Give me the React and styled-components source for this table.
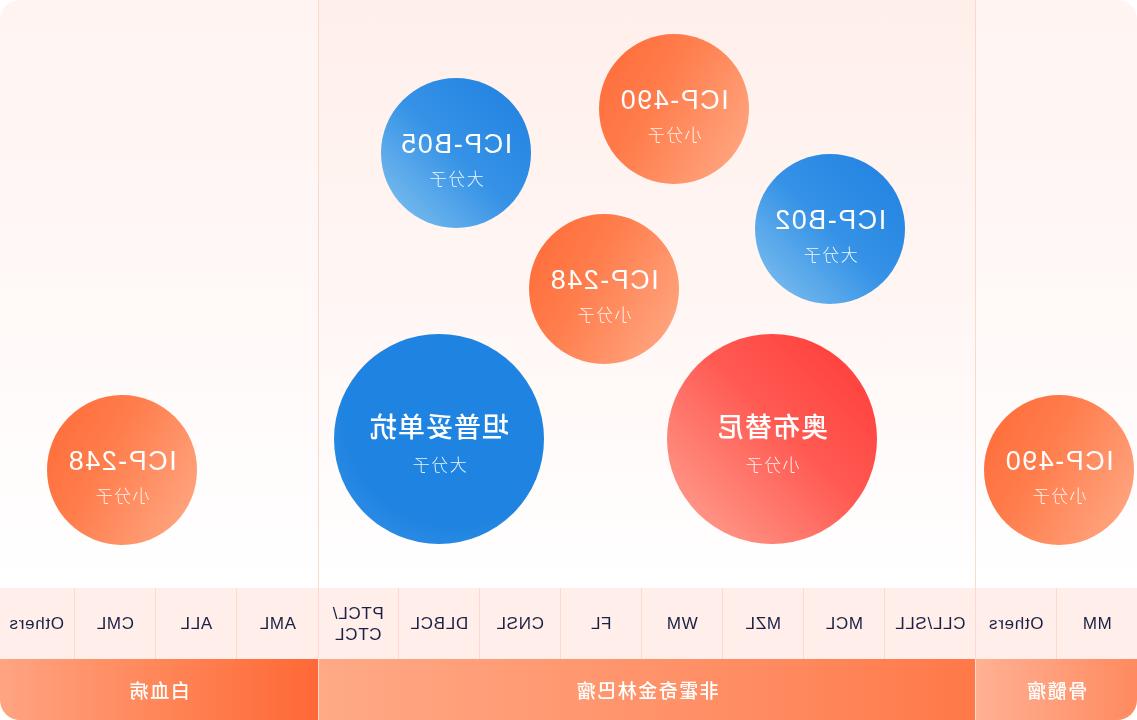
import React from 'react';
import styled, { createGlobalStyle } from 'styled-components';

const GlobalStyle = createGlobalStyle`
  html, body {
    margin: 0;
    padding: 0;
    background: #ffffff;
  }
  body {
    font-family: "Liberation Sans", "Noto Sans CJK SC", Arial, sans-serif;
  }
`;

// the reference is a mirror image, so the whole board is flipped once here
const Page = styled.div`
  width: 1137px;
  height: 720px;
  transform: scaleX(-1);
`;

const Board = styled.div`
  display: flex;
  width: 100%;
  height: 100%;
  border-radius: 20px;
  overflow: hidden;
`;

const Section = styled.div`
  display: flex;
  flex-direction: column;
  width: ${p => p.width}px;
  flex-shrink: 0;
  box-sizing: border-box;
  border-left: ${p => (p.first ? 'none' : '1.5px solid #fcd9cd')};
`;

const Canvas = styled.div`
  position: relative;
  flex: 1;
  background: ${p =>
    p.strong
      ? 'linear-gradient(to bottom, #ffefeb 0%, #fff7f5 55%, #ffffff 100%)'
      : 'linear-gradient(to bottom, #fff4f1 0%, #fff9f8 55%, #ffffff 100%)'};
`;

const LabelRow = styled.div`
  display: grid;
  grid-template-columns: ${p => p.cols};
  height: 71px;
  background: #ffeee9;
`;

const Cell = styled.div`
  display: flex;
  align-items: center;
  justify-content: center;
  text-align: center;
  box-sizing: border-box;
  border-left: ${p => (p.first ? 'none' : '1.5px solid #fbd9cd')};
  font-size: 17px;
  letter-spacing: 0.7px;
  line-height: 21px;
  color: #1a2145;
`;

const Band = styled.div`
  display: flex;
  align-items: center;
  justify-content: center;
  height: 61px;
  background: ${p => p.bg};
  color: #ffffff;
  font-family: "Noto Sans CJK SC", sans-serif;
  font-size: 19px;
  font-weight: 500;
  letter-spacing: 1.5px;
`;

const Bubble = styled.div`
  position: absolute;
  display: flex;
  flex-direction: column;
  align-items: center;
  justify-content: center;
  box-sizing: border-box;
  padding-top: ${p => (p.big ? 8 : 12)}px;
  width: ${p => p.size}px;
  height: ${p => p.size}px;
  border-radius: 50%;
  background: ${p => p.bg};
  color: #ffffff;
`;

const BubbleTitle = styled.div`
  font-family: ${p => (p.big ? '"Noto Sans CJK SC", sans-serif' : '"Liberation Sans", "Noto Sans CJK SC", sans-serif')};
  font-size: 27px;
  font-weight: ${p => (p.big ? 500 : 400)};
  letter-spacing: ${p => (p.big ? 1 : 1.5)}px;
  line-height: 1.2;
`;

const BubbleSub = styled.div`
  margin-top: ${p => (p.big ? 8 : 5)}px;
  font-family: "Noto Sans CJK SC", sans-serif;
  font-size: 17px;
  font-weight: 300;
  letter-spacing: 1.5px;
  opacity: 0.92;
`;

const fills = {
  orange: 'linear-gradient(240deg, #ff6a37 0%, #ff7d4c 40%, #ffac89 100%)',
  blue: 'linear-gradient(135deg, #1f80e0 0%, #3592e6 50%, #86c4ef 100%)',
  deepBlue: 'radial-gradient(circle at 42% 38%, #1e83e1 62%, #3d97e6 100%)',
  red: 'linear-gradient(135deg, #ff3838 0%, #ff5a52 45%, #ffa796 100%)',
};

const sections = [
  {
    name: '骨髓瘤',
    width: 161,
    cols: '80px 81px',
    labels: ['MM', 'Others'],
    band: 'linear-gradient(to right, #ff8a5f 0%, #ffb193 100%)',
    bubbles: [{ title: 'ICP-490', sub: '小分子', x: 3, y: 395, size: 150, fill: 'orange' }],
  },
  {
    name: '非霍奇金林巴瘤',
    width: 657,
    strong: true,
    cols: '90px repeat(7, 81px)',
    labels: ['CLL/SLL', 'MCL', 'MZL', 'WM', 'FL', 'CNSL', 'DLBCL', ['PTCL/', 'CTCL']],
    band: 'linear-gradient(to right, #ff7848 0%, #ff8a5f 30%, #ffa986 100%)',
    bubbles: [
      { title: 'ICP-490', sub: '小分子', x: 226, y: 34, size: 150, fill: 'orange' },
      { title: 'ICP-B05', sub: '大分子', x: 444, y: 78, size: 150, fill: 'blue' },
      { title: 'ICP-B02', sub: '大分子', x: 70, y: 154, size: 150, fill: 'blue' },
      { title: 'ICP-248', sub: '小分子', x: 296, y: 214, size: 150, fill: 'orange' },
      { title: '奥布替尼', sub: '小分子', x: 98, y: 334, size: 210, fill: 'red', big: true },
      { title: '坦普妥单抗', sub: '大分子', x: 431, y: 334, size: 210, fill: 'deepBlue', big: true },
    ],
  },
  {
    name: '白血病',
    width: 319,
    cols: '81px 81px 81px 76px',
    labels: ['AML', 'ALL', 'CML', 'Others'],
    band: 'linear-gradient(to right, #ff6836 0%, #ff8658 50%, #ffa482 100%)',
    bubbles: [{ title: 'ICP-248', sub: '小分子', x: 121, y: 395, size: 150, fill: 'orange' }],
  },
];

const App = () => (
  <>
    <GlobalStyle />
    <Page>
      <Board>
        {sections.map((s, i) => (
          <Section key={s.name} width={s.width} first={i === 0}>
            <Canvas strong={s.strong}>
              {s.bubbles.map(b => (
                <Bubble
                  key={b.title + b.x}
                  size={b.size}
                  big={b.big}
                  bg={fills[b.fill]}
                  style={{ left: b.x, top: b.y }}
                >
                  <BubbleTitle big={b.big}>{b.title}</BubbleTitle>
                  <BubbleSub big={b.big}>{b.sub}</BubbleSub>
                </Bubble>
              ))}
            </Canvas>
            <LabelRow cols={s.cols}>
              {s.labels.map((l, j) => (
                <Cell key={j} first={j === 0}>
                  {Array.isArray(l) ? (
                    <span>
                      {l[0]}
                      <br />
                      {l[1]}
                    </span>
                  ) : (
                    l
                  )}
                </Cell>
              ))}
            </LabelRow>
            <Band bg={s.band}>{s.name}</Band>
          </Section>
        ))}
      </Board>
    </Page>
  </>
);

export default App;
